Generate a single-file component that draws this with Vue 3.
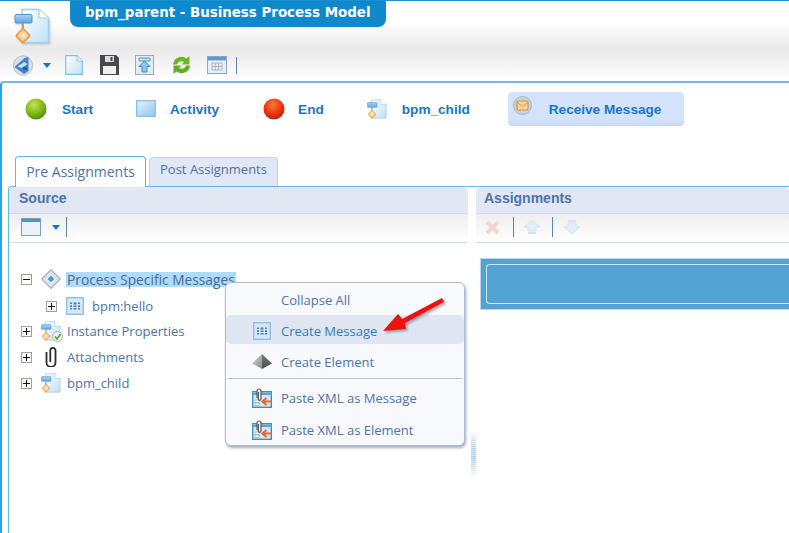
<template>
  <div class="page">
    <svg width="0" height="0" class="defs">
      <defs>
        <linearGradient id="paper" x1="0" y1="0" x2="1" y2="1"><stop offset="0" stop-color="#ffffff"/><stop offset="1" stop-color="#bfe0f6"/></linearGradient>
        <linearGradient id="box" x1="0" y1="0" x2="1" y2="1"><stop offset="0" stop-color="#e8f4fc"/><stop offset="1" stop-color="#8cc4ec"/></linearGradient>
        <linearGradient id="flow" x1="0" y1="0" x2="0" y2="1"><stop offset="0" stop-color="#a8d4f4"/><stop offset="1" stop-color="#5ea8e2"/></linearGradient>
        <radialGradient id="orange" cx=".5" cy=".45" r=".6"><stop offset="0" stop-color="#fff0d8"/><stop offset="1" stop-color="#f8a848"/></radialGradient>
        <radialGradient id="green" cx=".4" cy=".3" r=".75"><stop offset="0" stop-color="#c4e455"/><stop offset=".6" stop-color="#7db412"/><stop offset="1" stop-color="#4f8a0c"/></radialGradient>
        <radialGradient id="red" cx=".45" cy=".3" r=".75"><stop offset="0" stop-color="#ff7a3c"/><stop offset=".6" stop-color="#e8300c"/><stop offset="1" stop-color="#9c2a20"/></radialGradient>
        <linearGradient id="pyrL" x1="0" y1="0" x2="1" y2="1"><stop offset="0" stop-color="#d8d8d8"/><stop offset="1" stop-color="#8c8c8c"/></linearGradient>
        <linearGradient id="pyrR" x1="0" y1="0" x2="0" y2="1"><stop offset="0" stop-color="#7a7a7a"/><stop offset="1" stop-color="#4c4c4c"/></linearGradient>
        <symbol id="model" viewBox="0 0 36 36">
          <path d="M8 1.5H25L34.5 10V34.5H8Z" fill="url(#paper)" stroke="#a4d0ee" stroke-width="1.4"/>
          <path d="M25 1.5V10H34.5" fill="#fff" stroke="#a4d0ee" stroke-width="1.2"/>
          <rect x="1" y="6.5" width="17" height="8.5" rx="1" fill="url(#flow)" stroke="#4a96d4"/>
          <path d="M9 15V21" stroke="#c8844a" stroke-width="1.6"/>
          <path d="M9 20.5L15.5 27Q16 27.8 15.5 28.5L9 35L2.5 28.5Q2 27.8 2.5 27Z" fill="url(#orange)" stroke="#e8983c" stroke-width="1.4"/>
        </symbol>
        <symbol id="msg" viewBox="0 0 18 18">
          <rect x=".7" y=".7" width="16.6" height="16.6" fill="#d4e8f8" stroke="#8ec0e2" stroke-width="1.4"/>
          <path d="M4 5.5h2v1.6H4zM4 8.3h2v1.6H4zM4 11h2v1.6H4zM7.5 5.5h3v2h-3zM7.5 8.4h3v1.5h-3zM7.5 11h3v1.6h-3zM12 5.5h2v1.6h-2zM12 8.3h2v1.6h-2zM12 11h2v1.6h-2z" fill="#4d7fae"/>
        </symbol>
        <symbol id="paste" viewBox="0 0 20 20">
          <rect x=".7" y="3.7" width="18.6" height="15.6" fill="#d6e8f6" stroke="#3f8fc4" stroke-width="1.4"/>
          <rect x="1.5" y="4.5" width="17" height="2.6" fill="#5aa4d8"/>
          <path d="M3 12h4v2.5H3zM3 15h4v2.5H3z" fill="#fff" stroke="#6fa7cf" stroke-width=".6"/>
          <path d="M5 10V3a2 2 0 0 1 4 0v8a1.3 1.3 0 0 1-2.6 0V4" fill="#eee" stroke="#555" stroke-width="1.1"/>
          <path d="M20 13.5H11M14.5 10L10.5 13.5L14.5 17" fill="none" stroke="#ee6a16" stroke-width="2"/>
        </symbol>
      </defs>
    </svg>

    <header class="head">
      <div class="head-top">
        <svg class="logo" width="36" height="36"><use href="#model"/></svg>
        <h1 class="title">bpm_parent - Business Process Model</h1>
      </div>
      <div class="tools">
        <svg class="t-globe" width="20" height="21" viewBox="0 0 20 21">
          <circle cx="10" cy="10.5" r="9.6" fill="#dadfe6" stroke="#b4bcc6"/>
          <path d="M1.5 12L11.5 3L15.5 2V16L11 19Z" fill="#3f86c8"/>
          <path d="M4.5 11.5L11 7L14.5 9L8.5 13Z" fill="#c2e0f6"/>
          <path d="M10 12L14.5 12V15L10 15Z" fill="#1f5f9c"/>
        </svg>
        <span class="caret t-caret"></span>
        <svg class="t-doc" width="18" height="20" viewBox="0 0 18 20"><path d="M.7.7H12L17.3 6V19.3H.7Z" fill="url(#paper)" stroke="#86bde4" stroke-width="1.2"/><path d="M12 .7V6H17.3" fill="#fff" stroke="#86bde4"/></svg>
        <svg class="t-save" width="19" height="20" viewBox="0 0 19 20"><path d="M0 0H16L19 3V20H0Z" fill="#4a4a4e"/><rect x="5" y="1" width="9" height="6" fill="#dcdcdc"/><rect x="10.5" y="2" width="2" height="4" fill="#4a4a4e"/><rect x="3" y="11" width="13" height="8" fill="#f1f1f1"/></svg>
        <svg class="t-up" width="19" height="20" viewBox="0 0 19 20"><rect x=".5" y=".5" width="18" height="19" fill="#e3edf5" stroke="#a4a9ae"/><rect x="4" y="3" width="11" height="3" rx="1" fill="#cfe6f7" stroke="#3f8fc4"/><path d="M9.5 6L15 11.5H12V17H7V11.5H4Z" fill="#8cc6ee" stroke="#3f8fc4"/></svg>
        <svg class="t-sync" width="19" height="20" viewBox="0 0 19 20"><path d="M1 9.5A8.5 8.5 0 0 1 14.5 3.5L17.5 1V9.5H9.5L12 7A4.6 4.6 0 0 0 5 9.5Z" fill="#6fb52a"/><path d="M18 10.5A8.5 8.5 0 0 1 4.5 16.5L1.5 19V10.5H9.5L7 13A4.6 4.6 0 0 0 14 10.5Z" fill="#5fae22"/></svg>
        <svg class="t-cal" width="20" height="18" viewBox="0 0 20 18"><rect x=".5" y=".5" width="19" height="17" fill="#e8eef5" stroke="#8ca4bf"/><rect x="1" y="1" width="18" height="3.4" fill="#5a9ad0"/><path d="M5 7h10v7H5zM8.3 7v7M11.6 7v7M5 10.5h10" fill="none" stroke="#a9bacc"/></svg>
        <span class="t-sep"></span>
      </div>
    </header>

    <main class="main">
      <nav class="palette">
        <div v-for="p in palette" :key="p.label" class="pal" :class="[p.cls]">
          <svg v-if="p.cls === 'p-start'" width="22" height="22" viewBox="0 0 22 22"><circle cx="11" cy="11" r="10.5" fill="url(#green)"/></svg>
          <svg v-else-if="p.cls === 'p-activity'" width="20" height="18" viewBox="0 0 20 18"><rect x=".7" y=".7" width="18.6" height="15.6" fill="url(#box)" stroke="#8dc2ea" stroke-width="1.4"/></svg>
          <svg v-else-if="p.cls === 'p-end'" width="22" height="22" viewBox="0 0 22 22"><circle cx="11" cy="11" r="10.5" fill="url(#red)"/></svg>
          <svg v-else-if="p.cls === 'p-child'" width="20" height="20"><use href="#model"/></svg>
          <svg v-else width="19" height="19" viewBox="0 0 19 19"><circle cx="9.5" cy="9.5" r="9" fill="#c5d2e2" stroke="#a8b5c4"/><rect x="4" y="5" width="11" height="9" rx="1.5" fill="#fbd59f" stroke="#e8902c" stroke-width="1.2"/><path d="M5 7L9.5 10.5L14 7" fill="none" stroke="#e8902c"/></svg>
          <span class="pal-label">{{ p.label }}</span>
        </div>
      </nav>

      <div class="tabs">
        <div class="tab tab-on">Pre Assignments</div>
        <div class="tab tab-off">Post Assignments</div>
      </div>

      <section class="split">
        <div class="source">
          <div class="panel-head src-head">Source</div>
          <div class="panel-tools">
            <svg width="20" height="18" viewBox="0 0 20 18"><rect x=".5" y=".5" width="19" height="17" fill="#eef0f8" stroke="#7d9ab8"/><rect x="1" y="1" width="18" height="3" fill="#4f93cc"/></svg>
            <span class="caret src-caret"></span>
            <span class="src-sep"></span>
          </div>
          <ul class="tree">
            <li class="row">
              <span class="exp minus"></span>
              <svg class="ico" width="20" height="20" viewBox="0 0 20 20"><path d="M10 .8L19.2 10L10 19.2L.8 10Z" fill="#dfe9f3" stroke="#a9b2bc" stroke-width="1.3" stroke-linejoin="round"/><path d="M10 4L16 10L10 16L4 10Z" fill="#f4f8fc" stroke="#cfd8e0"/><path d="M10 6.5L13.5 10L10 13.5L6.5 10Z" fill="#3f9ae0"/></svg>
              <span class="lbl sel">Process Specific Messages</span>
            </li>
            <li class="row sub">
              <span class="exp plus"></span>
              <svg class="ico2" width="18" height="18"><use href="#msg"/></svg>
              <span class="lbl">bpm:hello</span>
            </li>
            <li class="row">
              <span class="exp plus"></span>
              <span class="ico icon-wrap">
                <svg width="20" height="20"><use href="#model"/></svg>
                <svg class="check" width="11" height="11" viewBox="0 0 11 11"><circle cx="5.5" cy="5.5" r="5" fill="#eef0f2" stroke="#aab2ba"/><path d="M3 5.5L5 8L8.5 3" fill="none" stroke="#4f9e20" stroke-width="1.5"/></svg>
              </span>
              <span class="lbl">Instance Properties</span>
            </li>
            <li class="row">
              <span class="exp plus"></span>
              <svg class="ico" width="20" height="20" viewBox="0 0 20 20"><path d="M5.5 5V15.5a4.5 4.5 0 0 0 9 0V3.5a2.6 2.6 0 0 0-5.2 0V15" fill="none" stroke="#2c2c2c" stroke-width="1.8"/></svg>
              <span class="lbl">Attachments</span>
            </li>
            <li class="row">
              <span class="exp plus"></span>
              <svg class="ico" width="20" height="20"><use href="#model"/></svg>
              <span class="lbl">bpm_child</span>
            </li>
          </ul>
        </div>

        <div class="assign">
          <div class="panel-head a-head">Assignments</div>
          <div class="panel-tools a-tools">
            <svg width="17" height="17" viewBox="0 0 17 17"><path d="M3 3L14 14M14 3L3 14" stroke="#f5d6cc" stroke-width="4"/></svg>
            <span class="a-sep s1"></span>
            <svg class="up" width="20" height="18" viewBox="0 0 20 18"><path d="M10 2L18 9H14V13H6V9H2Z" fill="#e3eff7" stroke="#d3e3ee"/><path d="M6 15H14" stroke="#d3e3ee" stroke-width="2"/></svg>
            <span class="a-sep s2"></span>
            <svg class="down" width="20" height="18" viewBox="0 0 20 18"><path d="M10 16L18 9H14V5H6V9H2Z" fill="#e3eff7" stroke="#d3e3ee"/><path d="M6 3H14" stroke="#d3e3ee" stroke-width="2"/></svg>
          </div>
          <div class="drop"><div class="drop-in"></div></div>
        </div>
      </section>

      <div class="menu">
        <div class="mi"><span class="mi-ico"></span>Collapse All</div>
        <div class="mi mi-on"><span class="mi-ico"><svg width="18" height="18"><use href="#msg"/></svg></span>Create Message</div>
        <div class="mi mi-el"><span class="mi-ico"><svg width="20" height="18" viewBox="0 0 20 18"><path d="M10 1L0 10.5L10 16Z" fill="url(#pyrL)"/><path d="M10 1L20 10.5L10 16Z" fill="url(#pyrR)"/></svg></span>Create Element</div>
        <div class="mi-line"></div>
        <div class="mi"><span class="mi-ico"><svg width="20" height="20"><use href="#paste"/></svg></span>Paste XML as Message</div>
        <div class="mi mi-last"><span class="mi-ico"><svg width="20" height="20"><use href="#paste"/></svg></span>Paste XML as Element</div>
      </div>

      <svg class="arrow" width="70" height="42" viewBox="0 0 70 42">
        <path d="M3 35L18 18L22 23L62 2L64 6L25 27L26 33Z" fill="#ee1111" style="filter:drop-shadow(2px 2px 1px rgba(0,0,0,.3))"/>
      </svg>
      <div class="grip"></div>
    </main>
  </div>
</template>

<script setup>
const palette = [
  { label: 'Start', cls: 'p-start' },
  { label: 'Activity', cls: 'p-activity' },
  { label: 'End', cls: 'p-end' },
  { label: 'bpm_child', cls: 'p-child' },
  { label: 'Receive Message', cls: 'p-msg' }
]
</script>

<style>
html, body { margin: 0; background: #fff; overflow: hidden; }
</style>

<style scoped>
.page { width: 789px; height: 533px; overflow: hidden; position: relative; font-family: "Open Sans", "Liberation Sans", sans-serif; background: #fff; }
.defs { position: absolute; }

.head { height: 81px; box-sizing: border-box; border-top: 1px solid #1a8fd0; background: linear-gradient(#fff 0%, #fff 25%, #e9e9e9 60%, #fff 100%); }
.head-top { display: flex; align-items: flex-start; height: 52px; }
.logo { margin: 7px 0 0 14px; filter: drop-shadow(1px 1px 1px rgba(0,0,0,.2)); }
.title { margin: 0 0 0 20px; box-sizing: border-box; width: 316px; height: 26px; padding-left: 15px; background: #1088cc; color: #fff; border-radius: 0 0 8px 8px; font: bold 13.4px/24px "DejaVu Sans", sans-serif; white-space: nowrap; }
.tools { display: flex; align-items: center; height: 24px; }
.t-globe { margin-left: 13px; }
.caret { display: block; width: 0; height: 0; border-left: 4.5px solid transparent; border-right: 4.5px solid transparent; border-top: 5px solid #1a72c0; }
.t-caret { margin-left: 10px; }
.t-doc { margin-left: 14px; }
.t-save { margin-left: 17px; }
.t-up { margin-left: 16px; }
.t-sync { margin-left: 18px; }
.t-cal { margin-left: 16px; }
.t-sep { width: 1px; height: 17px; background: #5f83ad; margin-left: 9px; }

.main { position: relative; height: 452px; box-sizing: border-box; border-top: 2px solid #74b8e8; border-left: 2px solid #2ba2ee; border-radius: 4px 0 0 0; background: #fff; }
.palette { display: flex; align-items: center; height: 34px; margin-top: 9px; position: relative; }
.pal { display: flex; align-items: center; color: #1b75c3; font: bold 13.6px "Liberation Sans", sans-serif; padding-top: 1px; }
.pal-label { white-space: nowrap; }
.pal > svg { margin-top: -1px; }
.p-start { margin-left: 23px; }
.p-start .pal-label { margin-left: 15px; }
.p-activity { margin-left: 43px; }
.p-activity .pal-label { margin-left: 14px; }
.p-end { margin-left: 44px; }
.p-end .pal-label { margin-left: 13px; }
.p-child { margin-left: 43px; }
.p-child .pal-label { margin-left: 15px; }
.p-msg { margin-left: 38px; width: 176px; height: 34px; box-sizing: border-box; padding: 1px 0 0 5px; background: linear-gradient(#d2e3fa, #d2e3fa 80%, #c8daf3); border-radius: 4px; }
.pal.p-msg > svg { margin-top: -9px; }
.p-msg .pal-label { margin-left: 17px; }

.tabs { display: flex; gap: 3px; margin: 29px 0 0 13px; height: 31px; align-items: flex-end; }
.tab { box-sizing: border-box; color: #4c72ac; border-radius: 4px 4px 0 0; white-space: nowrap; text-align: center; }
.tab-on { width: 131px; height: 31px; line-height: 30px; font-size: 14px; background: #fff; border: 1px solid #5cb8f0; border-bottom: 0; position: relative; z-index: 1; margin-bottom: -1px; }
.tab-off { width: 129px; height: 29px; line-height: 23px; font-size: 13px; background: #e1e7f3; border: 1px solid #c0d4e8; border-bottom: 0; }

.split { display: grid; grid-template-columns: 459px 1fr; column-gap: 8px; margin-left: 6px; height: 347px; border-top: 1px solid #5cb8f0; border-left: 1px solid #5cb8f0; border-radius: 4px 0 0 0; }
.source, .assign { min-width: 0; }
.panel-head { height: 27px; box-sizing: border-box; background: #e1e7f3; border-bottom: 1px solid #cbdcee; border-radius: 4px 4px 0 0; padding-left: 8px; color: #4c72ac; font: bold 14px/22px "Liberation Sans", sans-serif; }
.src-head { padding-left: 10px; }
.panel-tools { height: 29px; box-sizing: border-box; display: flex; align-items: center; padding: 0 0 2px 12px; background: linear-gradient(#eeeeee, #fff); border-bottom: 1px solid #cbdcee; }
.src-caret { margin-left: 11px; }
.src-sep { width: 1px; height: 20px; background: #5f83ad; margin-left: 6px; }

.tree { list-style: none; margin: 23px 0 0; padding: 0; font-size: 13px; color: #4c72ac; }
.row { display: flex; align-items: center; height: 26px; padding-left: 12px; position: relative; }
.row.sub { padding: 2px 0 0 37px; box-sizing: border-box; }
.exp { width: 11px; height: 11px; box-sizing: border-box; border: 1px solid #a49e92; background: #fff; position: relative; flex: none; margin-right: 9px; }
.exp::before { content: ""; position: absolute; left: 1px; right: 1px; top: 4px; height: 1px; background: #111; }
.plus::after { content: ""; position: absolute; top: 1px; bottom: 1px; left: 4px; width: 1px; background: #111; }
.ico { flex: none; margin-right: 6px; }
.ico2 { flex: none; margin-right: 8px; }
.icon-wrap { position: relative; width: 20px; height: 20px; }
.check { position: absolute; right: -2px; bottom: -1px; }
.lbl { white-space: nowrap; }
.sel { background: #aedcf8; padding: 0 1px; margin-left: -1px; font-size: 13.75px; line-height: 15px; color: #466a94; }

.a-head { padding-left: 8px; }
.a-tools { padding-left: 8px; }
.a-sep { width: 1px; height: 20px; background: #5f83ad; }
.s1 { margin-left: 12px; }
.up { margin-left: 8px; }
.s2 { margin-left: 10px; }
.down { margin-left: 9px; }
.drop { margin: 15px 0 0 4px; height: 52px; box-sizing: border-box; background: #52a2d3; border: 1px solid #bcd6e8; border-right: 0; padding: 5px 0 5px 5px; }
.drop-in { height: 100%; box-sizing: border-box; border: 1px solid #d8e6f2; border-right: 0; border-radius: 4px 0 0 4px; }

.menu { position: absolute; left: 223px; top: 199px; width: 240px; height: 164px; box-sizing: border-box; padding-top: 1px; background: #f8f9fd; border: 1px solid #aabdd2; border-radius: 6px; box-shadow: 1px 2px 3px rgba(60,70,90,.45); font-size: 13px; color: #4c72ac; }
.mi { display: flex; align-items: center; height: 31px; box-sizing: border-box; white-space: nowrap; }
.mi-on { height: 29px; padding-top: 2px; background: #dfe6f1; border-radius: 5px; color: #2f7cc2; }
.mi-el { height: 33px; padding-top: 2px; }
.mi-last { height: 32px; padding-top: 2px; }
.mi-ico { width: 55px; display: flex; justify-content: center; padding-left: 16px; box-sizing: border-box; }
.mi-line { height: 1px; background: #a9c5de; margin: 1px 2px 3px; }
.arrow { position: absolute; left: 378px; top: 213px; overflow: visible; }
.grip { position: absolute; left: 469px; top: 347px; width: 5px; height: 48px; background: repeating-linear-gradient(rgba(255,255,255,0) 0 1px, rgba(255,255,255,.55) 1px 2px), linear-gradient(#fff, #a8cdf4 40%, #a8cdf4 60%, #fff); }
</style>
